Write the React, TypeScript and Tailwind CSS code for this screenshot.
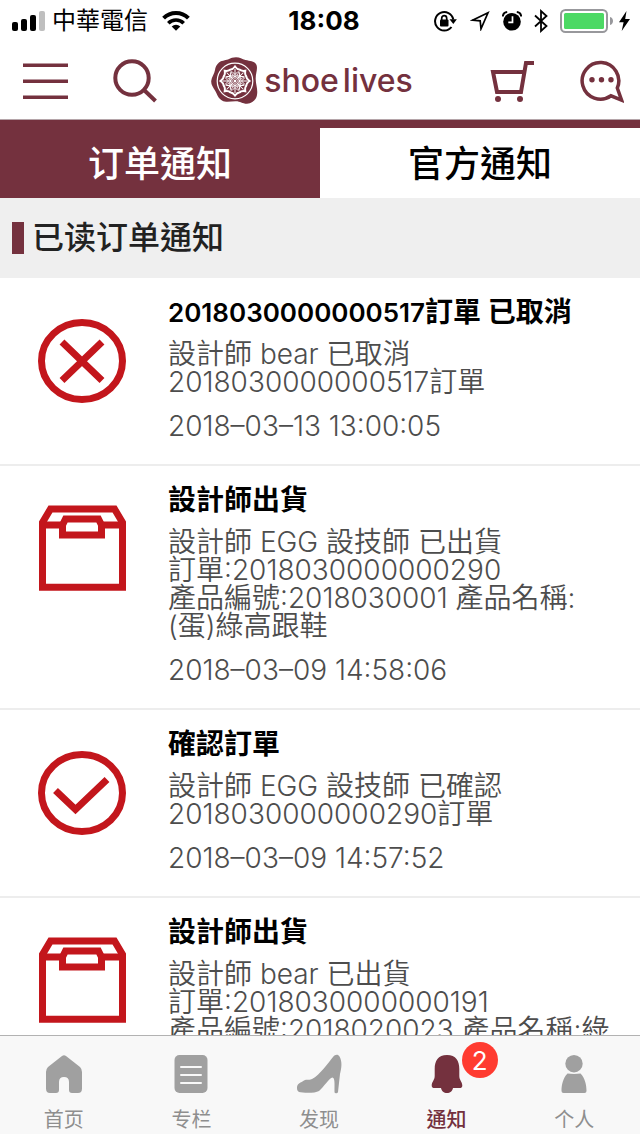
import { Fragment } from "react";
import type { ReactNode } from "react";

type IconKind = "cancel" | "box" | "check";

interface Notice {
  icon: IconKind;
  title: string;
  lines: string[];
  time?: string;
}

const notices: Notice[] = [
  {
    icon: "cancel",
    title: "2018030000000517訂單 已取消",
    lines: ["設計師 bear 已取消", "2018030000000517訂單"],
    time: "2018–03–13 13:00:05",
  },
  {
    icon: "box",
    title: "設計師出貨",
    lines: [
      "設計師 EGG 設技師 已出貨",
      "訂單:2018030000000290",
      "產品編號:2018030001 產品名稱:",
      "(蛋)綠高跟鞋",
    ],
    time: "2018–03–09 14:58:06",
  },
  {
    icon: "check",
    title: "確認訂單",
    lines: ["設計師 EGG 設技師 已確認", "2018030000000290訂單"],
    time: "2018–03–09 14:57:52",
  },
  {
    icon: "box",
    title: "設計師出貨",
    lines: [
      "設計師 bear 已出貨",
      "訂單:2018030000000191",
      "產品編號:2018020023 產品名稱:綠",
    ],
  },
];

/* Latin runs in a title are set slightly smaller than the Chinese characters around them. */
function Title({ text }: { text: string }) {
  const parts = text.split(/([\x20-\x7e]+)/).filter(Boolean);
  return (
    <h3 className="h-7 font-semibold whitespace-nowrap text-black">
      {parts.map((part, i) =>
        /^[\x20-\x7e]/.test(part) ? (
          <span key={i} className="text-[26px]">
            {part}
          </span>
        ) : (
          <Fragment key={i}>{part}</Fragment>
        ),
      )}
    </h3>
  );
}

function StatusBar() {
  return (
    <div className="grid h-10 shrink-0 grid-cols-[1fr_auto_1fr] items-center pt-0.5 pr-1 pl-3 text-black">
      <div className="flex items-center">
        <svg width="34" height="20" viewBox="0 0 34 20" aria-hidden="true">
          <rect x="0" y="11" width="6" height="9" rx="2" />
          <rect x="9" y="8" width="6" height="12" rx="2" />
          <rect x="18" y="4" width="6" height="16" rx="2" />
          <rect x="27" y="0" width="6" height="20" rx="2" fill="#bfbfbf" />
        </svg>
        <span className="ml-1.5 text-2xl leading-9">中華電信</span>
        <svg className="ml-3.5" width="28" height="20" viewBox="0 0 28 20" fill="none" stroke="#000" strokeWidth="4" aria-hidden="true">
          <path d="M1.600 7.200a17.600 17.600 0 0 1 24.800 0" />
          <path d="M6.300 12.200a10.900 10.900 0 0 1 15.400 0" strokeWidth="3.600" />
          <path d="M14 19.800l-4.300-4.300a6.100 6.100 0 0 1 8.600 0z" fill="#000" stroke="none" />
        </svg>
      </div>
      <span className="text-[26px] leading-9 font-bold">18:08</span>
      <div className="flex items-center justify-end">
        <svg width="24" height="22" viewBox="0 0 24 22" aria-hidden="true">
          <path d="M17.500 17A9.200 9.200 0 1 1 19.300 9.500" fill="none" stroke="#000" strokeWidth="2" />
          <path d="M15.500 9.200h7.400l-3.600 4.800z" />
          <rect x="6" y="9.500" width="8.500" height="7" rx="1" />
          <path d="M7.700 10V8.200a2.500 2.500 0 0 1 5 0V10" fill="none" stroke="#000" strokeWidth="1.700" />
        </svg>
        <svg className="ml-3" width="20" height="20" viewBox="0 0 20 20" fill="none" stroke="#000" strokeWidth="1.700" aria-hidden="true">
          <path d="M18 1.800 2.500 9.200l7.700.6.800 8z" strokeLinejoin="miter" />
        </svg>
        <svg className="ml-3" width="20" height="20" viewBox="0 0 20 20" aria-hidden="true">
          <circle cx="10" cy="10.800" r="8.800" />
          <path d="M.8 5.500A5 5 0 0 1 5.200 1M19.200 5.500A5 5 0 0 0 14.800 1" fill="none" stroke="#000" strokeWidth="2" />
          <path d="M10.500 5.300v6H6.300" fill="none" stroke="#fff" strokeWidth="1.700" />
        </svg>
        <svg className="ml-3" width="14" height="24" viewBox="0 0 14 24" fill="none" stroke="#000" strokeWidth="1.800" aria-hidden="true">
          <path d="M1 6.500 12.500 17 7 22V2l5.500 5L1 17.500" />
        </svg>
        <svg className="ml-3" width="54" height="24" viewBox="0 0 54 24" aria-hidden="true">
          <rect x="1" y="1" width="46" height="22" rx="4.500" fill="#fff" stroke="#98989c" strokeWidth="2" />
          <rect x="4" y="4" width="40" height="16" rx="1.500" fill="#4cd964" />
          <path d="M50 8c4 1 4 7 0 8z" fill="#98989c" />
        </svg>
        <svg className="ml-1" width="18" height="20" viewBox="0 0 18 20" aria-hidden="true">
          <path d="M8.500 0 1 11.200h4.600L3.700 20 12 8H7.200z" />
        </svg>
      </div>
    </div>
  );
}

function Seal() {
  const spokes = [0, 45, 90, 135, 180, 225, 270, 315];
  return (
    <svg width="48" height="48" viewBox="0 0 48 48" aria-hidden="true">
      <path
        d="M8 5.500C10 3.500 14 3.500 17 2.500 20 1 22 .3 25 .3c4 0 6 2 9.500 2.700C39 4 43 4 45 7c2.500 4-.5 9-.3 15C44.800 28 47 32 46 38c-.8 5-5 8.500-10 8.700-5 0-7-2.700-11.500-2.500-5 .2-9.500 1.600-13.500-.7C7 41 6.500 38 4 33.500 2 30 0 28 .2 24 .5 20 3.500 17 4 13c.3-3 1.500-5.200 4-7.500z"
        fill="#74313e"
      />
      <circle cx="24" cy="24" r="17.800" fill="none" stroke="#fff" strokeWidth="1.200" />
      <g transform="translate(24 24)" fill="none" stroke="#fff">
        {spokes.map((a) => (
          <g key={a} transform={`rotate(${a})`}>
            <path d="M-5-11.500C-3-11-1.500-12.500 0-14.500 1.500-12.500 3-11 5-11.500" strokeWidth="2" />
            <path d="M0-12V-2M-3-9.500 0-6.500 3-9.500M-2-6.500 0-4 2-6.500" strokeWidth="1" />
            <path d="M0-11V-3" strokeWidth=".7" transform="rotate(22.5)" />
          </g>
        ))}
        <circle r="1.500" fill="#fff" stroke="none" />
      </g>
    </svg>
  );
}

function Header() {
  return (
    <header className="grid h-20 shrink-0 grid-cols-[1fr_auto_1fr] items-center border-b border-[#b5a5a9] pt-0.5 pr-4">
      <div className="flex items-center gap-[45px] pl-[23px]">
        <button type="button" aria-label="菜单">
          <svg width="45" height="44" viewBox="0 0 45 44" fill="#74313e" aria-hidden="true">
            <path d="M0 4.500h45v3.500H0zM0 20.500h45v3.500H0zM0 36.500h45V40H0z" />
          </svg>
        </button>
        <button type="button" aria-label="搜索">
          <svg width="44" height="44" viewBox="0 0 44 44" fill="none" stroke="#74313e" strokeWidth="4" aria-hidden="true">
            <circle cx="19" cy="19" r="16.700" />
            <path d="M30.500 30.500 42.500 42" />
          </svg>
        </button>
      </div>
      <a href="#home" className="flex items-center gap-[5px]">
        <Seal />
        <span className="flex gap-1 text-[32px] leading-10 font-medium text-[#74313e]">
          <span>shoe</span>
          <span>lives</span>
        </span>
      </a>
      <div className="flex items-center justify-end gap-[46px]">
        <button type="button" aria-label="购物车">
          <svg width="44" height="44" viewBox="0 0 44 44" fill="none" stroke="#74313e" strokeWidth="4" aria-hidden="true">
            <path d="M44 4H36L31 33H7L3 13H34" strokeLinejoin="miter" />
            <circle cx="8" cy="40" r="3" fill="#74313e" stroke="none" />
            <circle cx="30" cy="40" r="3" fill="#74313e" stroke="none" />
          </svg>
        </button>
        <button type="button" aria-label="聊天">
          <svg width="44" height="44" viewBox="0 0 44 44" fill="none" stroke="#74313e" strokeWidth="3.500" aria-hidden="true">
            <path d="M37.300 29 41.500 41 31 36.800A18.300 18.300 0 1 1 37.300 29z" />
            <g fill="#74313e" stroke="none">
              <circle cx="12" cy="20.700" r="2.700" />
              <circle cx="21.500" cy="20.700" r="2.700" />
              <circle cx="31" cy="20.700" r="2.700" />
            </g>
          </svg>
        </button>
      </div>
    </header>
  );
}

function NoticeIcon({ kind }: { kind: IconKind }) {
  return (
    <svg
      className="mt-[38px] shrink-0"
      width="88"
      height="88"
      viewBox="0 0 88 88"
      fill="none"
      stroke="#c3161c"
      strokeWidth="7"
      aria-hidden="true"
    >
      {kind === "box" ? (
        <>
          <path d="M4.500 18.500V83.200H84.500V18.500L76.500 5H12.500z" />
          <path d="M4 21H24M64 21H85" />
          <path d="M24.500 31V21L27.500 15H60.500L63.500 21V31z" />
        </>
      ) : (
        <>
          <ellipse cx="44" cy="45" rx="40.500" ry="38.500" />
          {kind === "cancel" ? (
            <path d="M24 26 64 64.500M64 26 24 64.500" />
          ) : (
            <path d="M17.500 42.500 37.500 61.500 69 31.500" />
          )}
        </>
      )}
    </svg>
  );
}

function NoticeItem({ notice }: { notice: Notice }) {
  return (
    <li className="flex gap-[42px] border-b-2 border-[#ededed] pr-4 pl-[38px]">
      <NoticeIcon kind={notice.icon} />
      <div className="min-w-0 flex-1 pt-5 pb-6 text-[28px] leading-7 text-[#4d4d4d]">
        <Title text={notice.title} />
        <p className="mt-3.5 font-[350]">
          {notice.lines.map((line) => (
            <span key={line} className="block h-7 whitespace-nowrap">
              {line}
            </span>
          ))}
        </p>
        {notice.time && <time className="mt-4 block h-7 font-[350]">{notice.time}</time>}
      </div>
    </li>
  );
}

function NavItem({
  label,
  href,
  active = false,
  badge,
  children,
}: {
  label: string;
  href: string;
  active?: boolean;
  badge?: number;
  children: ReactNode;
}) {
  return (
    <a
      href={href}
      aria-current={active ? "page" : undefined}
      className={`flex flex-1 flex-col items-center pt-[18px] ${active ? "text-[#74313e]" : "text-[#8e8e8e]"}`}
    >
      <span className={`relative ${active ? "text-[#74313e]" : "text-[#a0a0a0]"}`}>
        <svg width="48" height="40" viewBox="0 0 48 40" fill="currentColor" aria-hidden="true">
          {children}
        </svg>
        {badge !== undefined && (
          <span className="absolute -top-3 left-[39px] flex size-9 items-center justify-center rounded-full bg-[#ff3b30] text-[26px] text-white">
            {badge}
          </span>
        )}
      </span>
      <span className={`mt-3 text-xl leading-7 ${active ? "font-medium" : ""}`}>{label}</span>
    </a>
  );
}

export default function App() {
  return (
    <div className="flex h-screen flex-col overflow-hidden bg-white pb-0.5 font-['Inter','Noto_Sans_CJK_TC',sans-serif]">
      <StatusBar />
      <Header />
      <div role="tablist" className="flex shrink-0 border-t-8 border-[#74313e] text-4xl font-medium">
        <button type="button" role="tab" aria-selected="true" className="h-[70px] flex-1 bg-[#74313e] pt-0.5 text-white">
          订单通知
        </button>
        <button type="button" role="tab" aria-selected="false" className="h-[70px] flex-1 bg-white pt-0.5 text-black">
          官方通知
        </button>
      </div>
      <main className="min-h-0 flex-1 overflow-hidden">
        <h2 className="flex h-20 items-center gap-2 bg-[#efefef] pl-3 text-[32px] font-medium text-[#222]">
          <span className="h-8 w-3 bg-[#74313e]" />
          已读订单通知
        </h2>
        <ul>
          {notices.map((notice, i) => (
            <NoticeItem key={i} notice={notice} />
          ))}
        </ul>
      </main>
      <nav className="flex h-[99px] shrink-0 border-t border-[#b2b2b2] bg-[#f8f8f8] pr-0.5">
        <NavItem label="首页" href="#home">
          <path d="M22 2q2-1.500 4 0L40 13q2 2 2 5V34.500q0 4.500-4 4.500H32q-3 0-3-3V28q0-5-5-5t-5 5v8q0 3-3 3H10q-4 0-4-4.500V18q0-3 2-5z" />
        </NavItem>
        <NavItem label="专栏" href="#columns">
          <rect x="7.500" y="1" width="33" height="38" rx="5" />
          <path d="M14 13H34M14 21H34M14 29H34" stroke="#f8f8f8" strokeWidth="2" strokeLinecap="round" />
        </NavItem>
        <NavItem label="发现" href="#discover">
          <path d="M2 33.500c0-4 4-5 7-7 3-1.500 4 0 8-1.500C25 21 33 9 38 3 40 .5 43 0 44.500 2.500 47.500 8 46.500 14 45 20L43 38q-.5 1.500-2 1.200-1.500 0-1.500-1.200C39.500 30 40 24 37.500 23.500 34 24 29 33 24 37 20 39.500 8 39 4 38 2 37 2 35 2 33.500z" />
        </NavItem>
        <NavItem label="通知" href="#notices" active badge={2}>
          <path d="M24 1C33 1 36.300 7 36.300 15v7c0 4 3 6 3 9.500 0 2-1 2.500-3 2.500H30c-.5 3-3 5-6 5s-5.500-2-6-5H11.700c-2 0-3-.5-3-2.500 0-3.500 3-5.500 3-9.500v-7C11.700 7 15 1 24 1z" />
        </NavItem>
        <NavItem label="个人" href="#profile">
          <circle cx="24" cy="9.700" r="8.700" />
          <path d="M17.500 19.500c2 .3 4 .5 6.500.5s4.500-.2 6.500-.5C35 24 36.500 31 36.500 37q0 2-2 2H13.500q-2 0-2-2c0-6 1.500-13 6-17.500z" />
        </NavItem>
      </nav>
    </div>
  );
}
